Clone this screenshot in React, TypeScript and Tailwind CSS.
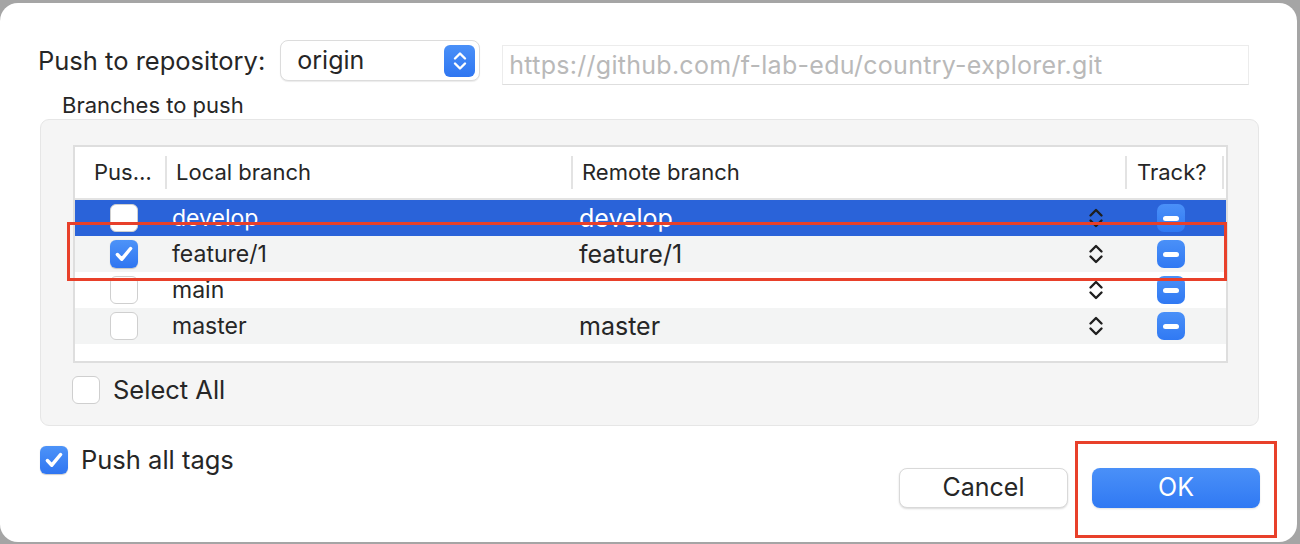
import React from 'react'

type Branch = {
  local: string
  remote: string
  push: boolean
}

const branches: Branch[] = [
  { local: 'develop', remote: 'develop', push: false },
  { local: 'feature/1', remote: 'feature/1', push: true },
  { local: 'main', remote: '', push: false },
  { local: 'master', remote: 'master', push: false },
]

function CheckBox({ checked }: { checked: boolean }) {
  if (checked) {
    return (
      <div className="w-[28px] h-[28px] rounded-[6px] bg-gradient-to-b from-[#4d93f8] to-[#2f75f1] flex items-center justify-center shadow-[0_0.5px_1px_rgba(0,0,0,0.2)]">
        <svg width="22" height="22" viewBox="0 0 20 20" fill="none">
          <path d="M4 10.5l4 4.2L16 5" stroke="white" strokeWidth={3.2} strokeLinecap="round" strokeLinejoin="round" />
        </svg>
      </div>
    )
  }
  return <div className="w-[28px] h-[28px] rounded-[6px] bg-white border border-[#cfcfcf]" />
}

function Stepper({ color = '#1f1f1f' }: { color?: string }) {
  return (
    <svg width="16" height="24" viewBox="0 0 16 24" fill="none">
      <path d="M2.5 9.5L8 4l5.5 5.5" stroke={color} strokeWidth={2.4} strokeLinecap="round" strokeLinejoin="round" />
      <path d="M2.5 14.5L8 20l5.5-5.5" stroke={color} strokeWidth={2.4} strokeLinecap="round" strokeLinejoin="round" />
    </svg>
  )
}

function TrackButton() {
  return (
    <div className="w-[28px] h-[28px] rounded-[7px] bg-gradient-to-b from-[#4a90f8] to-[#3079f3] flex items-center justify-center">
      <div className="w-[16px] h-[5px] rounded-full bg-white" />
    </div>
  )
}

export default function App() {
  return (
    <div className="w-[1300px] h-[544px] bg-[#a5a5a5] pt-[3px] pr-[3px] pb-[2px] font-['Inter',sans-serif] text-[#262626] overflow-hidden">
      <div className="relative h-full bg-white rounded-[18px] pt-[37px]">
        {/* repository row */}
        <div className="flex items-start pl-[38px]">
          <span className="text-[25.5px] leading-[41px] mr-[15px]">Push to repository:</span>
          <div className="w-[200px] h-[41px] rounded-[8px] bg-white border border-[#dcdcdc] shadow-[0_1px_1px_rgba(0,0,0,0.08)] flex items-center pl-[16px] pr-[4px]">
            <span className="flex-1 text-[25px] leading-none">origin</span>
            <div className="w-[31px] h-[32px] rounded-[6px] bg-gradient-to-b from-[#4a90f8] to-[#2f76f1] flex items-center justify-center">
              <svg width="16" height="24" viewBox="0 0 16 24" fill="none">
                <path d="M3 9.5L8 4.5l5 5" stroke="white" strokeWidth={2.4} strokeLinecap="round" strokeLinejoin="round" />
                <path d="M3 14.5l5 5 5-5" stroke="white" strokeWidth={2.4} strokeLinecap="round" strokeLinejoin="round" />
              </svg>
            </div>
          </div>
          <div className="ml-[22px] mt-[5px] w-[747px] h-[40px] bg-white border border-[#ececec] border-b-[#dedede] flex items-center pl-[6px]">
            <span className="text-[25px] text-[#b9b9b9] tracking-[0.28px] leading-none">https://github.com/f-lab-edu/country-explorer.git</span>
          </div>
        </div>

        <div className="pl-[62px] mt-[7px] text-[22px] leading-[26px]">Branches to push</div>

        {/* branches group */}
        <div className="ml-[40px] mt-[1px] w-[1219px] h-[307px] rounded-[9px] bg-[#f5f5f5] border border-[#e6e6e6] pt-[25px] pl-[32px]">
          <div className="w-[1155px] h-[218px] bg-white border-2 border-[#dedede]">
            <div className="flex h-[53px] items-center border-b-2 border-[#e3e3e3] text-[22px]">
              <div className="w-[90px] pl-[19px]">Pus…</div>
              <div className="w-[406px] h-[33px] flex items-center border-l-2 border-[#e3e3e3] pl-[9px]">Local branch</div>
              <div className="w-[554px] h-[33px] flex items-center border-l-2 border-[#e3e3e3] pl-[9px]">Remote branch</div>
              <div className="w-[99px] h-[33px] flex items-center border-l-2 border-r-2 border-[#e3e3e3] pl-[10px]">Track?</div>
            </div>
            {branches.map((b, i) => {
              const selected = i === 0
              const bg = selected ? 'bg-[#2a63d9] text-white' : i % 2 === 1 ? 'bg-[#f3f4f4]' : 'bg-white'
              return (
                <div key={b.local} className={`flex h-[36px] items-center ${bg}`}>
                  <div className="w-[90px] pl-[35px]">
                    <CheckBox checked={b.push} />
                  </div>
                  <div className="w-[406px] pl-[7px] text-[23px] leading-none">{b.local}</div>
                  <div className="w-[554px] pl-[8px] pr-[21px] flex items-center">
                    <span className="flex-1 text-[25px] leading-none">{b.remote}</span>
                    <Stepper />
                  </div>
                  <div className="w-[99px] pl-[32px]">
                    <TrackButton />
                  </div>
                </div>
              )
            })}
          </div>
          <div className="flex items-center h-[28px] mt-[13px] -ml-[1px]">
            <CheckBox checked={false} />
            <span className="ml-[13px] text-[25.5px] leading-none">Select All</span>
          </div>
        </div>

        {/* footer */}
        <div className="flex items-start pl-[40px] pr-[37px] mt-[20px]">
          <div className="flex items-center h-[28px]">
            <CheckBox checked />
            <span className="ml-[13px] text-[25.5px] leading-none">Push all tags</span>
          </div>
          <div className="ml-auto mt-[22px] flex gap-[24px]">
            <button className="w-[169px] h-[40px] rounded-[8px] bg-white border border-[#d9d9d9] shadow-[0_1px_2px_rgba(0,0,0,0.15)] text-[25px]">
              Cancel
            </button>
            <button className="w-[168px] h-[40px] rounded-[8px] bg-gradient-to-b from-[#4a90f8] to-[#3079f3] text-white text-[25px] shadow-[0_1px_2px_rgba(0,0,0,0.12)]">
              OK
            </button>
          </div>
        </div>

        {/* annotation boxes */}
        <div className="absolute left-[67px] top-[219px] w-[1160px] h-[59px] border-[3px] border-[#e8402a] pointer-events-none" />
        <div className="absolute left-[1075px] top-[438px] w-[202px] h-[97px] border-[3px] border-[#e8402a] pointer-events-none" />
      </div>
    </div>
  )
}
